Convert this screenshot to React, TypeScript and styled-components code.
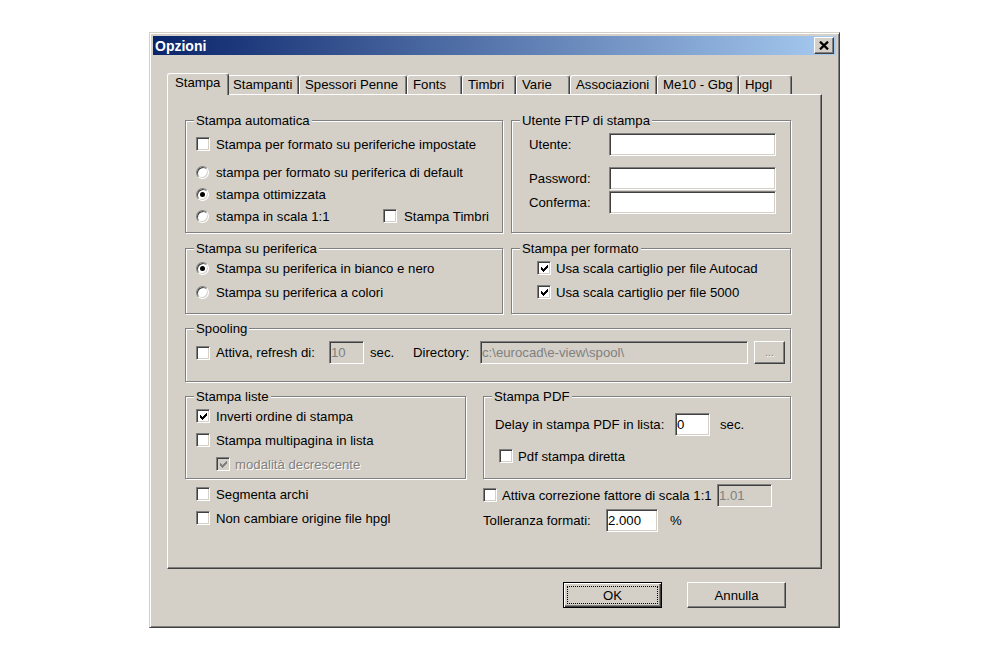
import React from "react"
import styled, { createGlobalStyle, css } from "styled-components"

const face = "#d4d0c8"
const shadow = "#808080"
const dark = "#404040"

const GlobalStyle = createGlobalStyle`
  html, body {
    margin: 0;
    background: #fff;
  }
  body {
    font-family: "Liberation Sans", Arial, sans-serif;
    font-size: 13.2px;
    color: #000;
  }
`

const Page = styled.div`
  padding: 32px 0 0 149px;
`

const Window = styled.div`
  width: 691px;
  height: 596px;
  box-sizing: border-box;
  background: ${face};
  border: 1px solid;
  border-color: ${face} ${dark} ${dark} ${face};
  box-shadow: inset 1px 1px 0 #fff, inset -1px -1px 0 ${shadow};
  padding: 3px;
  display: flex;
  flex-direction: column;
`

const TitleBar = styled.div`
  height: 19px;
  display: flex;
  align-items: center;
  justify-content: space-between;
  padding: 0 2px 0 2px;
  background: linear-gradient(to right, #0a246a, #a6caf0);
  color: #fff;
  font-weight: bold;
  font-size: 14px;
`

const raised = css`
  border: 1px solid;
  border-color: #fff ${dark} ${dark} #fff;
  box-shadow: inset -1px -1px 0 ${shadow}, inset 1px 1px 0 ${face};
`

const sunken = css`
  border: 1px solid;
  border-color: ${shadow} #fff #fff ${shadow};
  box-shadow: inset 1px 1px 0 ${dark}, inset -1px -1px 0 ${face};
`

const CloseButton = styled.div`
  width: 20px;
  height: 17px;
  box-sizing: border-box;
  background: ${face};
  ${raised};
  display: flex;
  align-items: center;
  justify-content: center;
`

const Body = styled.div`
  padding: 18px 14px 0 14px;
  display: flex;
  flex-direction: column;
`

const TabStrip = styled.div`
  display: flex;
  align-items: flex-end;
  height: 21px;
  padding-left: 2px;
`

const Tab = styled.div<{ $w: number; $active?: boolean }>`
  box-sizing: border-box;
  width: ${(p) => p.$w}px;
  height: 19px;
  border: 1px solid;
  border-color: #fff ${dark} transparent #fff;
  border-bottom: 0;
  border-radius: 3px 3px 0 0;
  box-shadow: inset -1px 0 0 ${shadow};
  padding-left: 5px;
  line-height: 17px;
  white-space: nowrap;
  background: ${face};

  ${(p) =>
    p.$active &&
    css`
      width: ${p.$w + 4}px;
      height: 22px;
      margin: 0 -2px -1px;
      padding-left: 7px;
      position: relative;
      z-index: 1;
    `}
`

const Panel = styled.div`
  box-sizing: border-box;
  height: 475px;
  border: 1px solid;
  border-color: #fff ${dark} ${dark} #fff;
  box-shadow: inset -1px -1px 0 ${shadow};
  padding: 25px 0 0 17px;
`

const Row = styled.div<{ $cols: string; $gap?: number; $mt?: number }>`
  display: grid;
  grid-template-columns: ${(p) => p.$cols};
  column-gap: ${(p) => p.$gap ?? 0}px;
  margin-top: ${(p) => p.$mt ?? 0}px;
  width: max-content;
`

const Group = styled.div<{ $h: number; $pt: number; $pl: number }>`
  position: relative;
  box-sizing: border-box;
  height: ${(p) => p.$h}px;
  border: 1px solid ${shadow};
  box-shadow: inset 1px 1px 0 #fff, 1px 1px 0 #fff;
  padding: ${(p) => p.$pt}px 0 0 ${(p) => p.$pl}px;
  display: flex;
  flex-direction: column;
`

const GroupTitle = styled.span`
  position: absolute;
  top: -8px;
  left: 8px;
  padding: 0 2px;
  background: ${face};
  line-height: 15px;
  white-space: nowrap;
`

const Line = styled.div<{ $h?: number; $mt?: number; $indent?: number }>`
  display: flex;
  align-items: center;
  height: ${(p) => p.$h ?? 22}px;
  margin-top: ${(p) => p.$mt ?? 0}px;
  padding-left: ${(p) => p.$indent ?? 0}px;
  white-space: nowrap;
`

const FieldLine = styled.div<{ $cols: string; $h?: number; $mt?: number }>`
  display: grid;
  grid-template-columns: ${(p) => p.$cols};
  align-items: center;
  height: ${(p) => p.$h ?? 23}px;
  margin-top: ${(p) => p.$mt ?? 0}px;
  white-space: nowrap;
`

const Choice = styled.label<{ $w?: number; $gap?: number }>`
  display: flex;
  align-items: center;
  gap: ${(p) => p.$gap ?? 6}px;
  width: ${(p) => (p.$w ? `${p.$w}px` : "auto")};
  line-height: 15px;
`

const Box = styled.span<{ $disabled?: boolean }>`
  box-sizing: border-box;
  width: 14px;
  height: 14px;
  flex: none;
  ${sunken};
  background: ${(p) => (p.$disabled ? face : "#fff")};
  display: flex;
  align-items: center;
  justify-content: center;
`

const RadioCircle = styled.span<{ $on?: boolean }>`
  box-sizing: border-box;
  width: 13px;
  height: 13px;
  flex: none;
  border-radius: 50%;
  border: 1px solid;
  border-color: ${shadow} #fff #fff ${shadow};
  box-shadow: inset 1px 1px 0 ${dark}, inset -1px -1px 0 ${face};
  background: #fff;
  display: flex;
  align-items: center;
  justify-content: center;
  margin-right: 1px;

  &::after {
    content: "";
    width: 5px;
    height: 5px;
    border-radius: 50%;
    background: #000;
    display: ${(p) => (p.$on ? "block" : "none")};
  }
`

const Label = styled.span<{ $disabled?: boolean; $ml?: number }>`
  line-height: 15px;
  margin-left: ${(p) => p.$ml ?? 0}px;
  ${(p) =>
    p.$disabled &&
    css`
      color: ${shadow};
      text-shadow: 1px 1px 0 #fff;
    `}
`

const Field = styled.input<{ $w: number }>`
  box-sizing: border-box;
  width: ${(p) => p.$w}px;
  height: 23px;
  margin: 0;
  ${sunken};
  background: #fff;
  font: inherit;
  color: #000;
  padding: 0 1px;
  outline: none;

  &:disabled {
    background: ${face};
    color: ${shadow};
  }
`

const SmallButton = styled.div`
  box-sizing: border-box;
  width: 31px;
  height: 23px;
  margin-left: 6px;
  background: ${face};
  ${raised};
  display: flex;
  align-items: center;
  justify-content: center;
  font-size: 10px;
  color: ${shadow};
  text-shadow: 1px 1px 0 #fff;
`

const ButtonRow = styled.div`
  display: flex;
  justify-content: flex-end;
  gap: 25px;
  margin-top: 13px;
  padding-right: 36px;
`

const PushButton = styled.button<{ $default?: boolean }>`
  position: relative;
  box-sizing: border-box;
  width: 99px;
  height: 26px;
  padding: 0;
  background: ${face};
  font: inherit;
  color: #000;
  ${raised};

  ${(p) =>
    p.$default &&
    css`
      border: 1px solid #000;
      box-shadow: inset 1px 1px 0 #fff, inset -1px -1px 0 ${dark},
        inset -2px -2px 0 ${shadow};

      &::after {
        content: "";
        position: absolute;
        inset: 3px;
        border: 1px dotted #000;
      }
    `}
`

const checkCols = [2, 3, 4, 3, 2, 1, 0]

function CheckMark({ color = "#000" }: { color?: string }) {
  return (
    <svg width="7" height="7" viewBox="0 0 7 7" shapeRendering="crispEdges">
      {checkCols.map((y, x) => (
        <rect key={x} x={x} y={y} width="1" height="3" fill={color} />
      ))}
    </svg>
  )
}

function CheckBox({
  checked,
  disabled,
  children,
  w,
  gap,
}: {
  checked?: boolean
  disabled?: boolean
  children: React.ReactNode
  w?: number
  gap?: number
}) {
  return (
    <Choice $w={w} $gap={gap}>
      <Box $disabled={disabled}>{checked && <CheckMark color={disabled ? shadow : "#000"} />}</Box>
      <Label $disabled={disabled}>{children}</Label>
    </Choice>
  )
}

function Radio({ on, children, w }: { on?: boolean; children: React.ReactNode; w?: number }) {
  return (
    <Choice $w={w}>
      <RadioCircle $on={on} />
      <Label>{children}</Label>
    </Choice>
  )
}

const tabs = [
  { label: "Stampa", w: 58 },
  { label: "Stampanti", w: 72 },
  { label: "Spessori Penne", w: 108 },
  { label: "Fonts", w: 55 },
  { label: "Timbri", w: 54 },
  { label: "Varie", w: 54 },
  { label: "Associazioni", w: 87 },
  { label: "Me10 - Gbg", w: 82 },
  { label: "Hpgl", w: 53 },
]

export default function App() {
  return (
    <Page>
      <GlobalStyle />
      <Window>
        <TitleBar>
          <span>Opzioni</span>
          <CloseButton>
            <svg width="10" height="9" viewBox="0 0 8 7">
              <path d="M0.8 0.4 L7.2 6.6 M7.2 0.4 L0.8 6.6" stroke="#000" strokeWidth="1.8" />
            </svg>
          </CloseButton>
        </TitleBar>

        <Body>
          <TabStrip>
            {tabs.map((t, i) => (
              <Tab key={t.label} $w={t.w} $active={i === 0}>
                {t.label}
              </Tab>
            ))}
          </TabStrip>

          <Panel>
            <Row $cols="318px 280px" $gap={8}>
              <Group $h={113} $pt={12} $pl={10}>
                <GroupTitle>Stampa automatica</GroupTitle>
                <Line>
                  <CheckBox>Stampa per formato su periferiche impostate</CheckBox>
                </Line>
                <Line $mt={6}>
                  <Radio>stampa per formato su periferica di default</Radio>
                </Line>
                <Line>
                  <Radio on>stampa ottimizzata</Radio>
                </Line>
                <Line>
                  <Radio w={187}>stampa in scala 1:1</Radio>
                  <CheckBox gap={7}>Stampa Timbri</CheckBox>
                </Line>
              </Group>

              <Group $h={113} $pt={12} $pl={17}>
                <GroupTitle>Utente FTP di stampa</GroupTitle>
                <FieldLine $cols="80px 167px">
                  <Label>Utente:</Label>
                  <Field $w={167} />
                </FieldLine>
                <FieldLine $cols="80px 167px" $mt={11}>
                  <Label>Password:</Label>
                  <Field $w={167} type="password" />
                </FieldLine>
                <FieldLine $cols="80px 167px" $mt={1}>
                  <Label>Conferma:</Label>
                  <Field $w={167} type="password" />
                </FieldLine>
              </Group>
            </Row>

            <Row $cols="318px 280px" $gap={8} $mt={15}>
              <Group $h={66} $pt={8} $pl={10}>
                <GroupTitle>Stampa su periferica</GroupTitle>
                <Line>
                  <Radio on>Stampa su periferica in bianco e nero</Radio>
                </Line>
                <Line $mt={2}>
                  <Radio>Stampa su periferica a colori</Radio>
                </Line>
              </Group>

              <Group $h={66} $pt={8} $pl={25}>
                <GroupTitle>Stampa per formato</GroupTitle>
                <Line>
                  <CheckBox checked gap={5}>
                    Usa scala cartiglio per file Autocad
                  </CheckBox>
                </Line>
                <Line $mt={2}>
                  <CheckBox checked gap={5}>
                    Usa scala cartiglio per file 5000
                  </CheckBox>
                </Line>
              </Group>
            </Row>

            <Row $cols="606px" $mt={14}>
              <Group $h={54} $pt={12} $pl={10}>
                <GroupTitle>Spooling</GroupTitle>
                <FieldLine $cols="133px 35px 49px 67px 268px 37px">
                  <CheckBox>Attiva, refresh di:</CheckBox>
                  <Field $w={35} disabled defaultValue="10" />
                  <Label $ml={6}>sec.</Label>
                  <Label>Directory:</Label>
                  <Field $w={268} disabled defaultValue="c:\eurocad\e-view\spool\" />
                  <SmallButton>...</SmallButton>
                </FieldLine>
              </Group>
            </Row>

            <Row $cols="281px 308px" $gap={17} $mt={14}>
              <Group $h={83} $pt={8} $pl={10}>
                <GroupTitle>Stampa liste</GroupTitle>
                <Line>
                  <CheckBox checked>Inverti ordine di stampa</CheckBox>
                </Line>
                <Line $mt={2}>
                  <CheckBox>Stampa multipagina in lista</CheckBox>
                </Line>
                <Line $mt={2} $indent={20}>
                  <CheckBox checked disabled gap={5}>
                    modalità decrescente
                  </CheckBox>
                </Line>
              </Group>

              <Group $h={83} $pt={16} $pl={11}>
                <GroupTitle>Stampa PDF</GroupTitle>
                <FieldLine $cols="180px 35px auto">
                  <Label>Delay in stampa PDF in lista:</Label>
                  <Field $w={35} defaultValue="0" />
                  <Label $ml={10}>sec.</Label>
                </FieldLine>
                <Line $mt={9} $indent={4}>
                  <CheckBox gap={5}>Pdf stampa diretta</CheckBox>
                </Line>
              </Group>
            </Row>

            <Row $cols="298px 308px" $mt={4}>
              <div>
                <Line $indent={11}>
                  <CheckBox>Segmenta archi</CheckBox>
                </Line>
                <Line $indent={11} $mt={2}>
                  <CheckBox>Non cambiare origine file hpgl</CheckBox>
                </Line>
              </div>
              <div>
                <FieldLine $cols="234px 55px" $h={24}>
                  <CheckBox gap={5}>Attiva correzione fattore di scala 1:1</CheckBox>
                  <Field $w={55} disabled defaultValue="1.01" />
                </FieldLine>
                <FieldLine $cols="123px 52px auto" $h={24} $mt={1}>
                  <Label>Tolleranza formati:</Label>
                  <Field $w={52} defaultValue="2.000" />
                  <Label $ml={12}>%</Label>
                </FieldLine>
              </div>
            </Row>
          </Panel>

          <ButtonRow>
            <PushButton $default>OK</PushButton>
            <PushButton>Annulla</PushButton>
          </ButtonRow>
        </Body>
      </Window>
    </Page>
  )
}
